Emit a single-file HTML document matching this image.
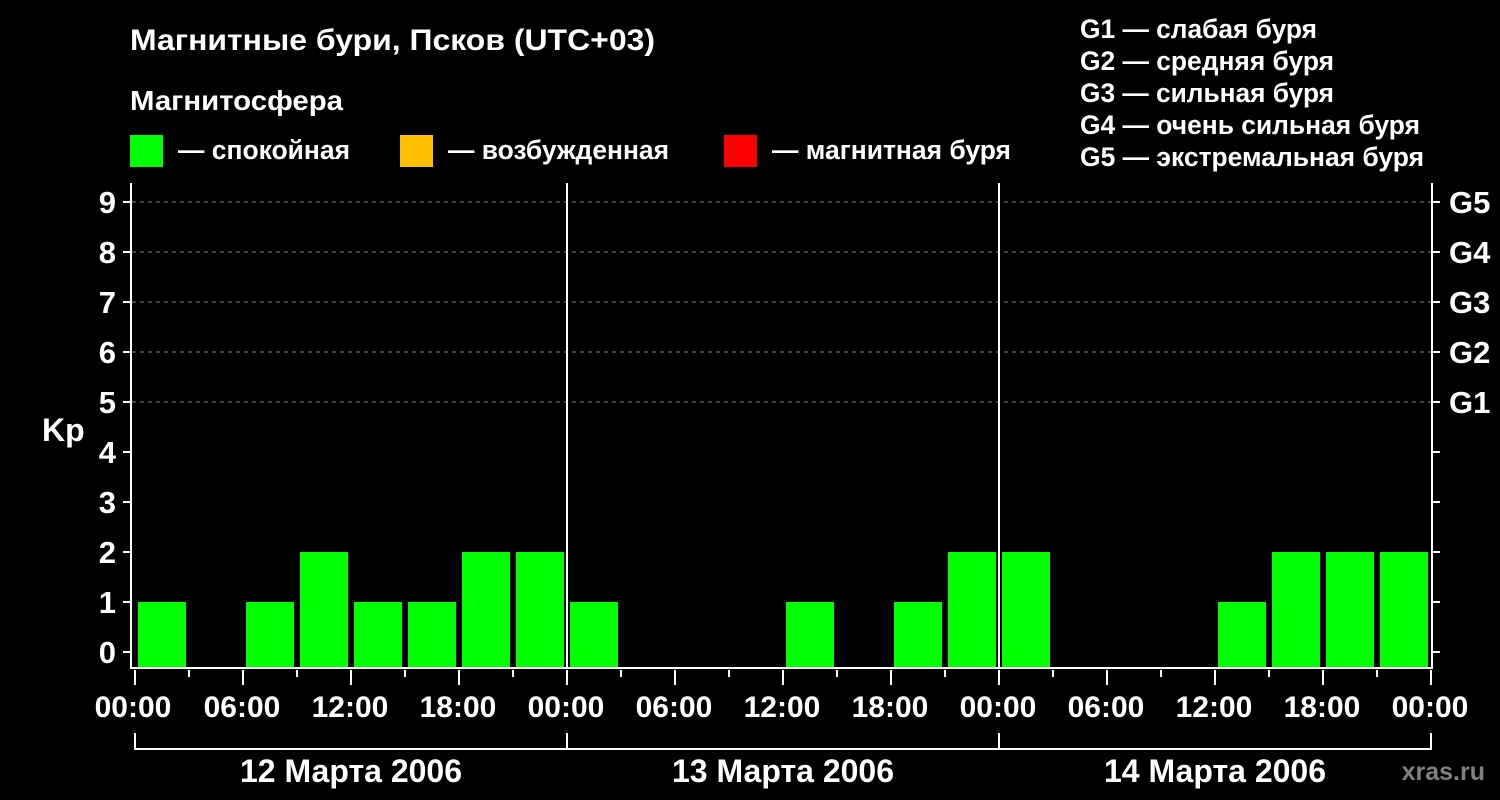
<!DOCTYPE html>
<html><head><meta charset="utf-8"><style>
html,body{margin:0;padding:0;background:#000;width:1500px;height:800px;overflow:hidden}
svg{display:block}
text{font-family:"Liberation Sans",Arial,sans-serif;font-weight:bold;fill:#fff}
</style></head><body>
<svg width="1500" height="800" viewBox="0 0 1500 800" xmlns="http://www.w3.org/2000/svg">
<rect width="1500" height="800" fill="#000"/>
<text x="130" y="50" font-size="30" textLength="525" lengthAdjust="spacingAndGlyphs">Магнитные бури, Псков (UTC+03)</text>
<text x="130" y="110" font-size="28" textLength="213" lengthAdjust="spacingAndGlyphs">Магнитосфера</text>
<rect x="130" y="135" width="33" height="32" fill="#00ff00"/>
<text x="178" y="159" font-size="27" textLength="172" lengthAdjust="spacingAndGlyphs">— спокойная</text>
<rect x="400" y="135" width="33" height="32" fill="#ffc000"/>
<text x="448" y="159" font-size="27" textLength="221" lengthAdjust="spacingAndGlyphs">— возбужденная</text>
<rect x="724" y="135" width="33" height="32" fill="#ff0000"/>
<text x="772" y="159" font-size="27" textLength="239" lengthAdjust="spacingAndGlyphs">— магнитная буря</text>
<g font-size="27">
<text x="1080" y="38" textLength="237" lengthAdjust="spacingAndGlyphs">G1 — слабая буря</text>
<text x="1080" y="70" textLength="254" lengthAdjust="spacingAndGlyphs">G2 — средняя буря</text>
<text x="1080" y="102" textLength="254" lengthAdjust="spacingAndGlyphs">G3 — сильная буря</text>
<text x="1080" y="134" textLength="340" lengthAdjust="spacingAndGlyphs">G4 — очень сильная буря</text>
<text x="1080" y="166" textLength="344" lengthAdjust="spacingAndGlyphs">G5 — экстремальная буря</text>
</g>
<g stroke="#888" stroke-width="1" stroke-dasharray="4,4">
<line x1="132" y1="202" x2="1432" y2="202"/><line x1="132" y1="252" x2="1432" y2="252"/><line x1="132" y1="302" x2="1432" y2="302"/><line x1="132" y1="352" x2="1432" y2="352"/><line x1="132" y1="402" x2="1432" y2="402"/>
</g>
<g fill="#00ff00">
<rect x="138" y="602" width="48" height="66"/>
<rect x="246" y="602" width="48" height="66"/>
<rect x="300" y="552" width="48" height="116"/>
<rect x="354" y="602" width="48" height="66"/>
<rect x="408" y="602" width="48" height="66"/>
<rect x="462" y="552" width="48" height="116"/>
<rect x="516" y="552" width="48" height="116"/>
<rect x="570" y="602" width="48" height="66"/>
<rect x="786" y="602" width="48" height="66"/>
<rect x="894" y="602" width="48" height="66"/>
<rect x="948" y="552" width="48" height="116"/>
<rect x="1002" y="552" width="48" height="116"/>
<rect x="1218" y="602" width="48" height="66"/>
<rect x="1272" y="552" width="48" height="116"/>
<rect x="1326" y="552" width="48" height="116"/>
<rect x="1380" y="552" width="48" height="116"/>
</g>
<g stroke="#fff" stroke-width="2" fill="none">
<polyline points="131,183 131,668 1432,668 1432,183"/>
<line x1="567" y1="183" x2="567" y2="668"/>
<line x1="999" y1="183" x2="999" y2="668"/>
<path d="M123 652H131M123 602H131M123 552H131M123 502H131M123 452H131M123 402H131M123 352H131M123 302H131M123 252H131M123 202H131"/>
<path d="M1432 652H1440M1432 602H1440M1432 552H1440M1432 502H1440M1432 452H1440M1432 402H1440M1432 352H1440M1432 302H1440M1432 252H1440M1432 202H1440"/>
<path d="M135 670V685M243 670V685M351 670V685M459 670V685M567 670V685M675 670V685M783 670V685M891 670V685M999 670V685M1107 670V685M1215 670V685M1323 670V685M1431 670V685"/>
<path d="M189 670V677M297 670V677M405 670V677M513 670V677M621 670V677M729 670V677M837 670V677M945 670V677M1053 670V677M1161 670V677M1269 670V677M1377 670V677"/>
<path d="M135 733V749H1431V733M567 733V749M999 733V749"/>
</g>
<g font-size="31" text-anchor="end">
<text x="116" y="663">0</text><text x="116" y="613">1</text><text x="116" y="563">2</text><text x="116" y="513">3</text><text x="116" y="463">4</text><text x="116" y="413">5</text><text x="116" y="363">6</text><text x="116" y="313">7</text><text x="116" y="263">8</text><text x="116" y="213">9</text>
</g>
<g font-size="31">
<text x="1449" y="413">G1</text><text x="1449" y="363">G2</text><text x="1449" y="313">G3</text><text x="1449" y="263">G4</text><text x="1449" y="213">G5</text>
</g>
<text x="42" y="441" font-size="32">Kp</text>
<g font-size="30" text-anchor="middle">
<text x="133" y="717">00:00</text><text x="242" y="717">06:00</text><text x="350" y="717">12:00</text><text x="458" y="717">18:00</text>
<text x="566" y="717">00:00</text><text x="674" y="717">06:00</text><text x="782" y="717">12:00</text><text x="890" y="717">18:00</text>
<text x="998" y="717">00:00</text><text x="1106" y="717">06:00</text><text x="1214" y="717">12:00</text><text x="1322" y="717">18:00</text>
<text x="1430" y="717">00:00</text>
</g>
<g font-size="32" text-anchor="middle">
<text x="351" y="782">12 Марта 2006</text><text x="783" y="782">13 Марта 2006</text><text x="1215" y="782">14 Марта 2006</text>
</g>
<text x="1485" y="780" font-size="25" text-anchor="end" style="fill:#808080">xras.ru</text>
</svg>
</body></html>
